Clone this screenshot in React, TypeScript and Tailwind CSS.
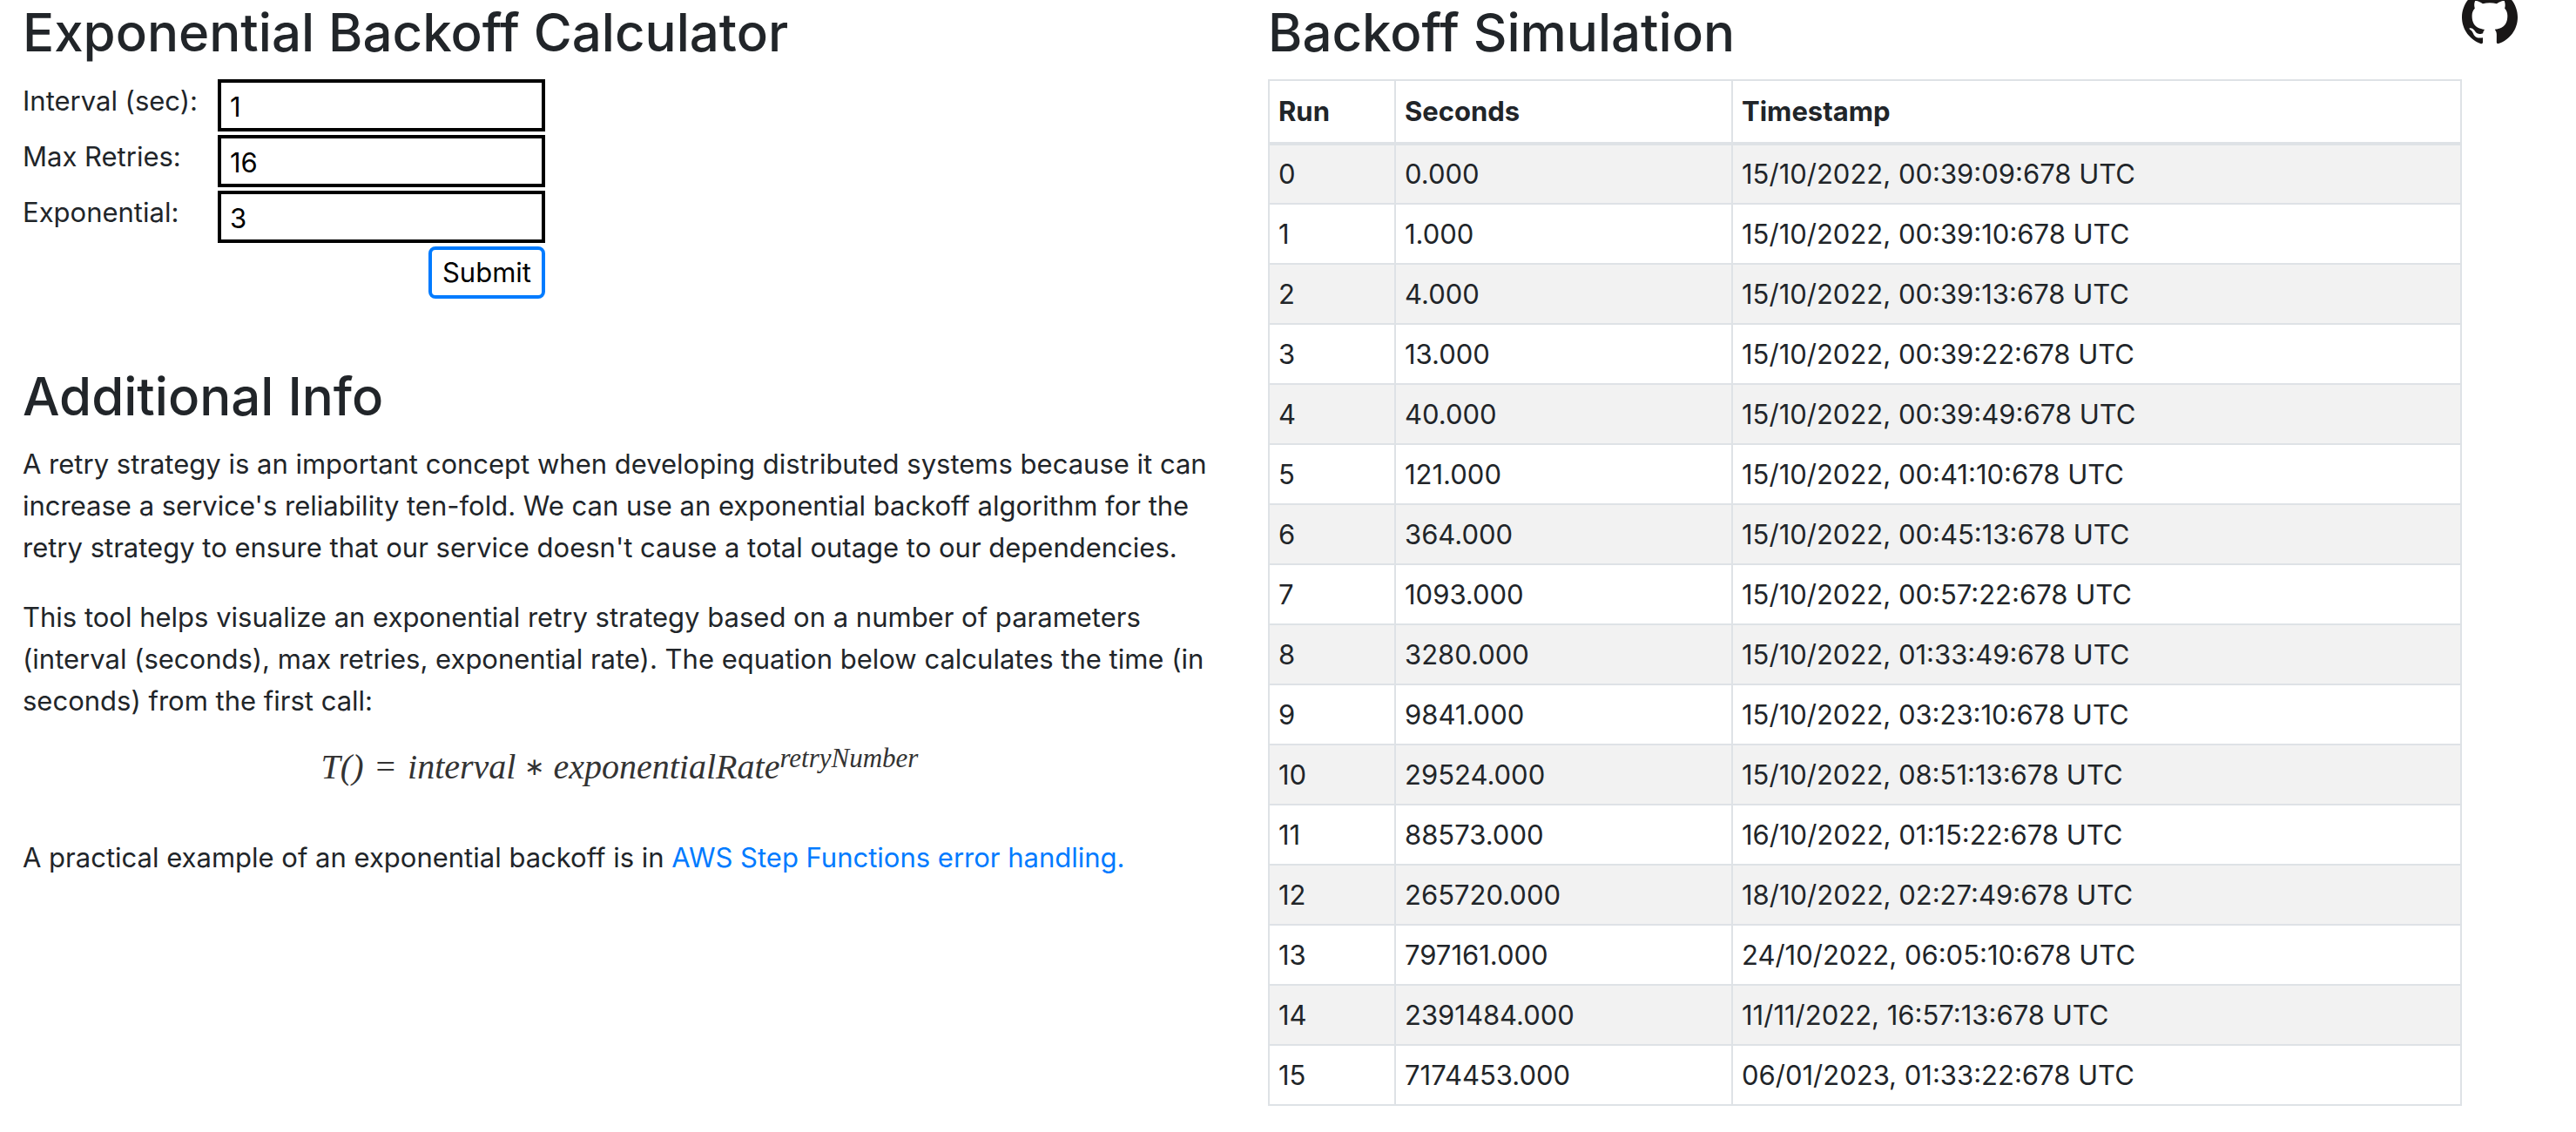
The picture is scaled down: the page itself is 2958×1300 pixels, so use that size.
import { useState } from "react";
import type { FormEvent, ReactNode } from "react";

type Run = { seconds: string; timestamp: string };

const RUNS: Run[] = [
  { seconds: "0.000", timestamp: "15/10/2022, 00:39:09:678 UTC" },
  { seconds: "1.000", timestamp: "15/10/2022, 00:39:10:678 UTC" },
  { seconds: "4.000", timestamp: "15/10/2022, 00:39:13:678 UTC" },
  { seconds: "13.000", timestamp: "15/10/2022, 00:39:22:678 UTC" },
  { seconds: "40.000", timestamp: "15/10/2022, 00:39:49:678 UTC" },
  { seconds: "121.000", timestamp: "15/10/2022, 00:41:10:678 UTC" },
  { seconds: "364.000", timestamp: "15/10/2022, 00:45:13:678 UTC" },
  { seconds: "1093.000", timestamp: "15/10/2022, 00:57:22:678 UTC" },
  { seconds: "3280.000", timestamp: "15/10/2022, 01:33:49:678 UTC" },
  { seconds: "9841.000", timestamp: "15/10/2022, 03:23:10:678 UTC" },
  { seconds: "29524.000", timestamp: "15/10/2022, 08:51:13:678 UTC" },
  { seconds: "88573.000", timestamp: "16/10/2022, 01:15:22:678 UTC" },
  { seconds: "265720.000", timestamp: "18/10/2022, 02:27:49:678 UTC" },
  { seconds: "797161.000", timestamp: "24/10/2022, 06:05:10:678 UTC" },
  { seconds: "2391484.000", timestamp: "11/11/2022, 16:57:13:678 UTC" },
  { seconds: "7174453.000", timestamp: "06/01/2023, 01:33:22:678 UTC" },
];

function Heading({ children }: { children: ReactNode }) {
  return <h2 className="mb-4 text-[60px] leading-[75px] font-medium">{children}</h2>;
}

function Field({ id, label, initial }: { id: string; label: string; initial: string }) {
  const [value, setValue] = useState(initial);
  return (
    <div className="flex h-[60px]">
      <label htmlFor={id} className="w-56 shrink-0 leading-[50px]">
        {label}
      </label>
      <input
        id={id}
        type="text"
        inputMode="numeric"
        value={value}
        onChange={(e) => setValue(e.target.value)}
        className="w-[376px] border-4 border-black bg-white px-2.5 pt-1 text-black outline-none"
      />
    </div>
  );
}

function Calculator() {
  return (
    <form
      className="flex w-[600px] flex-col gap-1"
      onSubmit={(e: FormEvent) => e.preventDefault()}
    >
      <Field id="interval" label="Interval (sec):" initial="1" />
      <Field id="max-retries" label="Max Retries:" initial="16" />
      <Field id="exponential" label="Exponential:" initial="3" />
      <button
        type="submit"
        className="h-[60px] self-end rounded-lg border-4 border-[#007bff] bg-white px-3 text-black"
      >
        Submit
      </button>
    </form>
  );
}

function Formula() {
  return (
    <div className="flex h-[132px] justify-center pt-7 font-['Liberation_Serif',serif] text-[40px] leading-[48px] text-[#333333] italic">
      <p className="flex">
        <span>T()</span>
        <span className="mx-3.5 not-italic">=</span>
        <span>interval</span>
        <span className="mx-2.5 text-[28px] not-italic">∗</span>
        <span>exponentialRate</span>
        <sup className="top-0 text-[31px] leading-7">retryNumber</sup>
      </p>
    </div>
  );
}

function SimulationTable() {
  const cell = "border-2 border-[#dee2e6] px-2.5 text-left";
  return (
    <table className="w-full table-fixed border-collapse border-2 border-[#dee2e6]">
      <colgroup>
        <col className="w-[145px]" />
        <col className="w-[387px]" />
        <col />
      </colgroup>
      <thead>
        <tr>
          {["Run", "Seconds", "Timestamp"].map((title) => (
            <th
              key={title}
              scope="col"
              className="border-2 border-b-4 border-[#dee2e6] px-2.5 py-[11px] text-left font-bold"
            >
              {title}
            </th>
          ))}
        </tr>
      </thead>
      <tbody>
        {RUNS.map((run, i) => (
          <tr key={i} className="h-[69px] odd:bg-[#f2f2f2]">
            <td className={cell}>{i}</td>
            <td className={cell}>{run.seconds}</td>
            <td className={cell}>{run.timestamp}</td>
          </tr>
        ))}
      </tbody>
    </table>
  );
}

function GithubMark() {
  return (
    <svg viewBox="0 0 24 24" className="size-16" fill="#191717" aria-hidden="true">
      <path d="M12 .297c-6.63 0-12 5.373-12 12 0 5.303 3.438 9.8 8.205 11.385.6.113.82-.258.82-.577 0-.285-.01-1.04-.015-2.04-3.338.724-4.042-1.61-4.042-1.61C4.422 18.07 3.633 17.7 3.633 17.7c-1.087-.744.084-.729.084-.729 1.205.084 1.838 1.236 1.838 1.236 1.07 1.835 2.809 1.305 3.495.998.108-.776.417-1.305.76-1.605-2.665-.3-5.466-1.332-5.466-5.93 0-1.31.465-2.38 1.235-3.22-.135-.303-.54-1.523.105-3.176 0 0 1.005-.322 3.3 1.23.96-.267 1.98-.399 3-.405 1.02.006 2.04.138 3 .405 2.28-1.552 3.285-1.23 3.285-1.23.645 1.653.24 2.873.12 3.176.765.84 1.23 1.91 1.23 3.22 0 4.61-2.805 5.625-5.475 5.92.42.36.81 1.096.81 2.22 0 1.606-.015 2.896-.015 3.286 0 .315.21.69.825.57C20.565 22.092 24 17.592 24 12.297c0-6.627-5.373-12-12-12" />
    </svg>
  );
}

export default function App() {
  return (
    <main className="relative grid min-h-screen grid-cols-2 gap-[59px] overflow-hidden bg-white pr-[131px] pl-[26px] font-['Inter',sans-serif] text-[31px] leading-[48px] text-[#212529]">
      <section>
        <Heading>Exponential Backoff Calculator</Heading>
        <Calculator />
        <div className="mt-[75px]">
          <Heading>Additional Info</Heading>
          <p className="mb-8">
            A retry strategy is an important concept when developing distributed systems because it
            can increase a service's reliability ten-fold. We can use an exponential backoff
            algorithm for the retry strategy to ensure that our service doesn't cause a total outage
            to our dependencies.
          </p>
          <p>
            This tool helps visualize an exponential retry strategy based on a number of parameters
            (interval (seconds), max retries, exponential rate). The equation below calculates the
            time (in seconds) from the first call:
          </p>
          <Formula />
          <p>
            A practical example of an exponential backoff is in{" "}
            <a href="#error-handling" className="text-[#007bff]">
              AWS Step Functions error handling.
            </a>
          </p>
        </div>
      </section>
      <section>
        <Heading>Backoff Simulation</Heading>
        <SimulationTable />
      </section>
      <a href="#github" aria-label="GitHub" className="absolute -top-[13px] right-[67px]">
        <GithubMark />
      </a>
    </main>
  );
}
